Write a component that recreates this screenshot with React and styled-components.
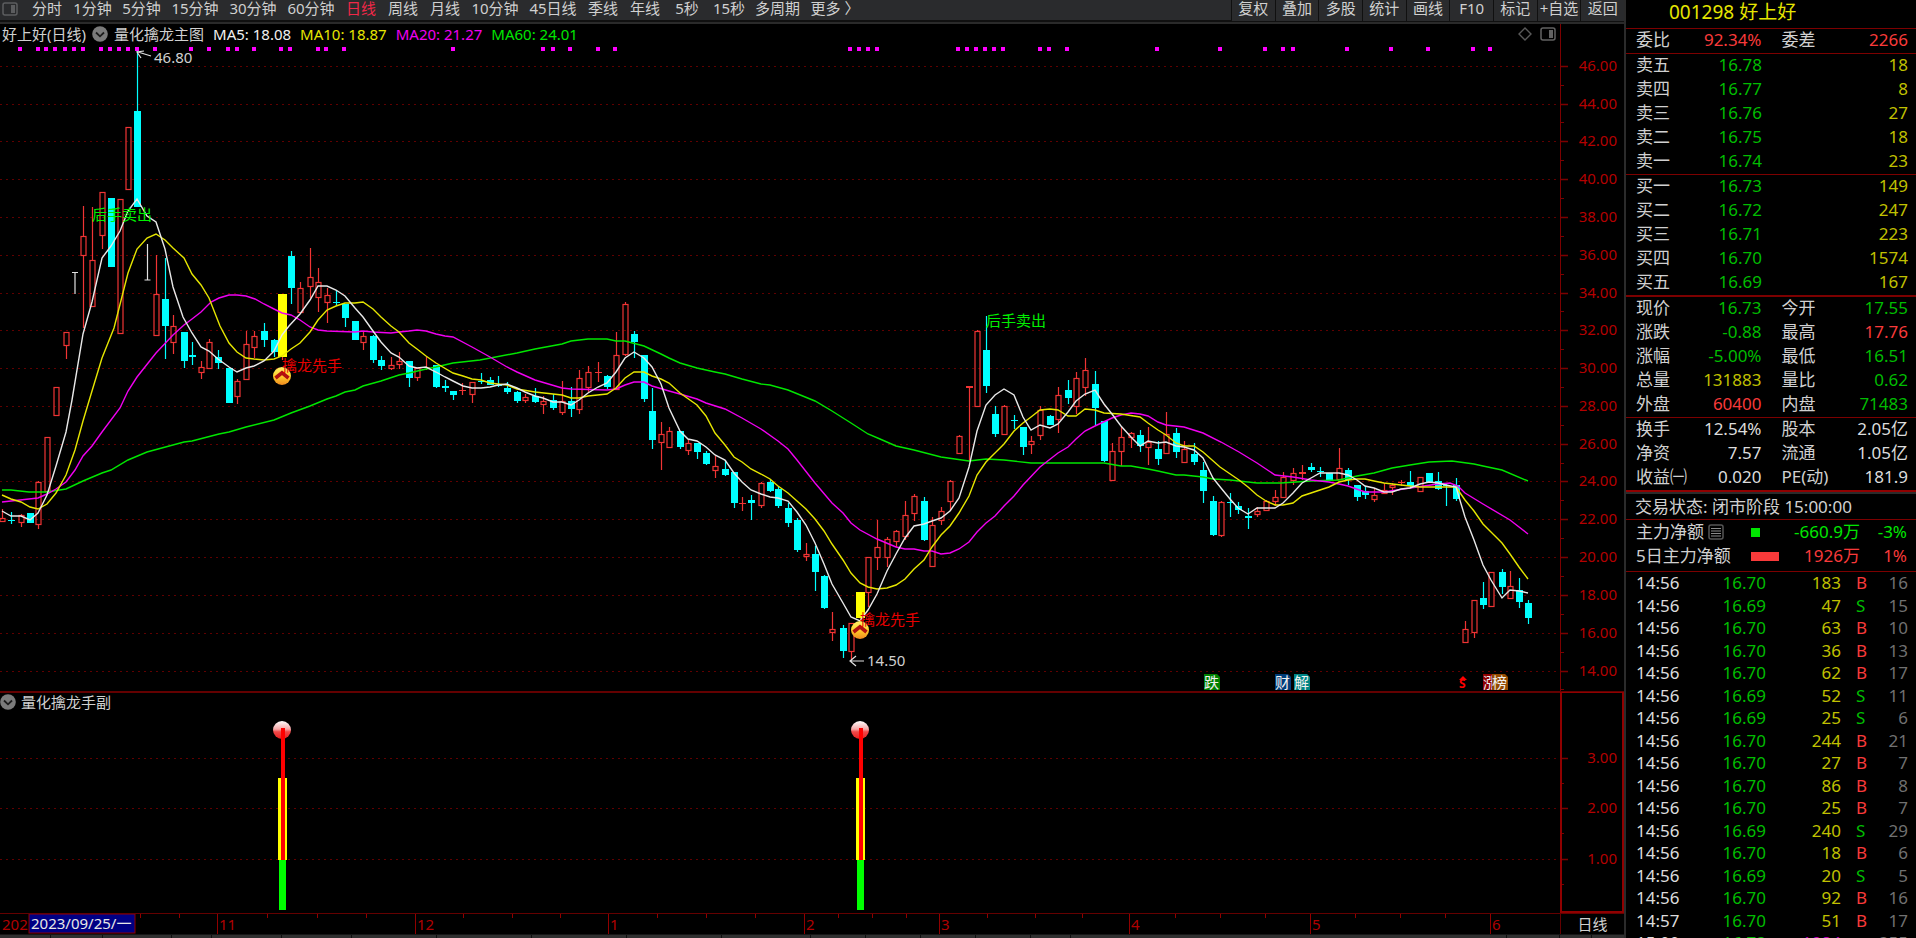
import React from 'react';
import styled, { createGlobalStyle } from 'styled-components';

const UP = '#f03434';
const DOWN = '#00ffff';
const LINE = '#7c0000';

const periods = [
  ['分时', 42],
  ['1分钟', 49],
  ['5分钟', 49],
  ['15分钟', 58],
  ['30分钟', 58],
  ['60分钟', 58],
  ['日线', 42],
  ['周线', 42],
  ['月线', 42],
  ['10分钟', 58],
  ['45日线', 58],
  ['季线', 42],
  ['年线', 42],
  ['5秒', 42],
  ['15秒', 42],
  ['多周期', 55],
  ['更多 〉', 60],
];

const tools = ['复权', '叠加', '多股', '统计', '画线', 'F10', '标记', '+自选', '返回'];

// x, high, open/close top, open/close bottom, low, kind
// r = rising, d = falling, y = signal bar, f = rising without a hollow
const candles = [
  [2, 509, 518, 521, 521, 'r'], [11, 512, 520, 521, 524, 'd'], [21, 514, 515, 522, 527, 'r'],
  [30, 513, 513, 523, 523, 'd'], [38, 481, 482, 524, 529, 'r'], [47, 437, 437, 491, 491, 'r'],
  [56, 387, 387, 415, 415, 'r'], [66, 332, 332, 345, 359, 'r'], [83, 206, 236, 255, 328, 'r'],
  [92, 207, 260, 306, 306, 'r'], [102, 192, 192, 235, 249, 'r'], [111, 198, 198, 267, 267, 'd'],
  [120, 199, 199, 333, 333, 'r'], [128, 127, 127, 189, 190, 'r'], [137, 51, 111, 207, 207, 'd'],
  [156, 255, 294, 335, 335, 'r'], [165, 258, 299, 326, 359, 'd'], [173, 315, 326, 342, 354, 'r'],
  [184, 332, 332, 361, 368, 'd'], [192, 342, 355, 357, 365, 'd'], [201, 361, 367, 372, 379, 'r'],
  [209, 339, 342, 368, 368, 'r'], [218, 350, 357, 363, 369, 'd'], [229, 368, 368, 403, 403, 'd'],
  [237, 379, 381, 396, 404, 'r'], [246, 331, 344, 379, 379, 'r'], [254, 331, 336, 347, 358, 'r'],
  [264, 323, 331, 340, 347, 'd'], [274, 339, 340, 352, 357, 'd'], [282, 294, 294, 357, 360, 'y'],
  [291, 251, 256, 288, 304, 'd'], [300, 282, 288, 312, 312, 'r'], [310, 248, 277, 286, 298, 'r'],
  [318, 268, 282, 297, 312, 'r'], [327, 288, 295, 302, 323, 'r'], [336, 290, 302, 303, 306, 'd'],
  [345, 304, 304, 318, 327, 'd'], [355, 321, 321, 340, 340, 'd'], [363, 331, 336, 342, 350, 'r'],
  [373, 335, 336, 360, 363, 'd'], [381, 356, 360, 366, 370, 'd'], [391, 357, 365, 368, 370, 'r'],
  [399, 352, 361, 364, 369, 'r'], [409, 361, 361, 378, 387, 'd'], [417, 368, 368, 377, 381, 'r'],
  [426, 357, 367, 368, 370, 'f'], [436, 365, 365, 387, 388, 'd'], [445, 380, 386, 388, 392, 'd'],
  [453, 391, 391, 395, 400, 'd'], [462, 383, 390, 391, 395, 'f'], [472, 382, 382, 394, 403, 'r'],
  [481, 373, 381, 382, 384, 'd'], [490, 377, 380, 385, 385, 'd'], [498, 376, 385, 386, 387, 'd'],
  [507, 382, 388, 392, 394, 'd'], [517, 391, 392, 401, 403, 'd'], [525, 394, 397, 400, 403, 'r'],
  [535, 388, 396, 402, 403, 'd'], [543, 396, 401, 404, 414, 'r'], [553, 394, 400, 408, 410, 'd'],
  [562, 381, 401, 412, 415, 'r'], [571, 387, 401, 409, 417, 'd'], [579, 370, 378, 409, 414, 'r'],
  [588, 366, 372, 387, 392, 'r'], [598, 362, 372, 373, 382, 'f'], [607, 375, 376, 387, 389, 'd'],
  [616, 332, 355, 389, 389, 'r'], [625, 302, 304, 354, 356, 'r'], [634, 331, 334, 342, 358, 'd'],
  [644, 355, 355, 399, 402, 'd'], [652, 388, 411, 440, 449, 'd'], [661, 422, 434, 442, 470, 'r'],
  [669, 427, 431, 447, 448, 'r'], [680, 431, 431, 447, 449, 'd'], [688, 440, 443, 450, 455, 'r'],
  [697, 443, 443, 452, 459, 'd'], [706, 451, 453, 464, 465, 'd'], [715, 456, 466, 470, 478, 'r'],
  [725, 460, 469, 475, 476, 'd'], [734, 472, 472, 503, 508, 'd'], [742, 497, 503, 504, 511, 'f'],
  [751, 495, 500, 503, 520, 'd'], [761, 482, 483, 505, 508, 'r'], [770, 479, 482, 491, 492, 'd'],
  [778, 486, 489, 506, 508, 'd'], [788, 503, 508, 523, 527, 'd'], [797, 518, 520, 550, 552, 'd'],
  [806, 543, 554, 556, 561, 'r'], [815, 546, 554, 572, 591, 'd'], [824, 575, 576, 608, 609, 'd'],
  [832, 612, 629, 632, 641, 'r'], [843, 625, 628, 651, 658, 'd'], [851, 623, 623, 651, 660, 'r'],
  [860, 592, 592, 618, 619, 'y'], [868, 557, 557, 592, 607, 'r'], [877, 520, 547, 557, 570, 'r'],
  [887, 537, 539, 557, 567, 'r'], [896, 530, 531, 541, 547, 'r'], [905, 501, 515, 536, 540, 'r'],
  [914, 494, 496, 513, 521, 'r'], [924, 497, 501, 540, 541, 'd'], [932, 517, 525, 566, 567, 'r'],
  [941, 507, 511, 520, 525, 'r'], [950, 480, 481, 501, 511, 'r'], [959, 435, 436, 453, 454, 'r'],
  [969, 386, 386, 388, 461, 'f'], [977, 330, 331, 406, 407, 'r'], [986, 316, 350, 386, 393, 'd'],
  [995, 406, 414, 434, 437, 'd'], [1004, 405, 406, 434, 435, 'r'], [1014, 415, 420, 421, 429, 'd'],
  [1023, 427, 427, 447, 455, 'd'], [1031, 436, 441, 444, 454, 'r'], [1040, 406, 410, 435, 440, 'r'],
  [1050, 415, 416, 425, 425, 'd'], [1058, 387, 395, 419, 433, 'r'], [1068, 380, 390, 398, 404, 'd'],
  [1076, 372, 378, 406, 414, 'r'], [1085, 358, 370, 387, 396, 'r'], [1095, 371, 384, 408, 425, 'd'],
  [1104, 421, 421, 461, 462, 'd'], [1112, 443, 451, 480, 480, 'r'], [1121, 427, 437, 451, 466, 'r'],
  [1131, 432, 433, 437, 448, 'r'], [1140, 430, 435, 446, 452, 'd'], [1148, 427, 442, 447, 465, 'r'],
  [1158, 441, 449, 459, 465, 'd'], [1166, 412, 434, 453, 453, 'r'], [1176, 428, 433, 452, 458, 'd'],
  [1184, 441, 449, 462, 462, 'r'], [1194, 443, 454, 462, 465, 'd'], [1203, 462, 470, 491, 503, 'd'],
  [1213, 496, 501, 535, 536, 'd'], [1221, 501, 502, 535, 537, 'r'], [1230, 493, 502, 503, 517, 'd'],
  [1238, 502, 506, 510, 514, 'd'], [1248, 508, 516, 518, 529, 'd'], [1257, 507, 511, 514, 517, 'r'],
  [1266, 500, 501, 510, 510, 'r'], [1275, 490, 497, 501, 506, 'r'], [1283, 472, 477, 497, 498, 'r'],
  [1293, 468, 473, 480, 485, 'r'], [1302, 465, 472, 474, 480, 'f'], [1311, 463, 467, 470, 472, 'd'],
  [1320, 467, 471, 472, 477, 'd'], [1329, 473, 473, 481, 481, 'd'], [1339, 448, 468, 479, 479, 'r'],
  [1348, 468, 470, 480, 485, 'd'], [1357, 485, 485, 497, 501, 'd'], [1365, 486, 491, 495, 499, 'd'],
  [1374, 489, 495, 499, 502, 'r'], [1384, 483, 490, 493, 493, 'r'], [1392, 483, 485, 487, 495, 'r'],
  [1401, 480, 482, 483, 486, 'f'], [1410, 471, 482, 486, 487, 'd'], [1420, 477, 477, 491, 491, 'r'],
  [1429, 473, 473, 483, 483, 'd'], [1438, 472, 481, 489, 490, 'd'], [1446, 484, 485, 486, 506, 'd'],
  [1456, 478, 485, 499, 501, 'd'], [1465, 621, 629, 642, 642, 'r'], [1474, 600, 600, 632, 638, 'r'],
  [1483, 582, 598, 605, 609, 'd'], [1491, 572, 572, 606, 606, 'r'], [1502, 569, 572, 587, 594, 'd'],
  [1510, 571, 586, 598, 599, 'r'], [1519, 578, 590, 602, 608, 'd'], [1528, 600, 603, 618, 624, 'd'],
];

const averages = [
  {
    color: '#00e600',
    points:
      '2,490 11,490 29,492 47,492 66,489 83,481 102,473 111,470 128,460 147,452 184,442 192,441 219,434 229,432 246,427 274,420 291,413 310,406 327,399 336,396 345,392 355,390 363,386 381,381 399,375 409,373 426,369 436,367 453,363 480,360 517,353 535,349 562,344 571,341 588,339 607,339 616,341 625,341 644,346 661,354 669,358 680,363 697,368 715,372 725,374 742,379 761,384 770,385 788,390 815,401 832,411 851,423 868,434 880,439 896,446 914,450 941,457 969,461 986,459 1004,460 1031,463 1104,463 1121,466 1131,466 1148,469 1158,471 1176,475 1184,475 1203,477 1213,479 1230,480 1257,483 1281,483 1311,481 1339,480 1357,476 1374,473 1392,468 1410,465 1429,462 1452,461 1474,464 1483,466 1502,470 1528,481',
  },
  {
    color: '#f000f0',
    points:
      '2,502 38,498 47,494 56,489 66,482 75,470 83,456 92,446 102,432 120,408 128,391 137,377 156,353 173,335 184,325 192,319 201,312 211,302 219,298 229,295 237,295 246,296 255,299 264,304 274,309 282,313 291,315 300,320 310,327 318,330 327,331 355,332 363,331 373,332 391,333 399,332 409,331 417,330 426,331 436,334 445,336 453,337 472,347 490,357 507,367 517,372 535,380 562,388 571,389 607,390 616,389 625,385 634,382 644,382 652,386 669,391 680,394 697,399 706,403 725,409 742,418 761,429 778,441 788,449 797,460 815,483 832,503 843,513 851,523 860,530 877,539 896,547 905,549 914,549 924,551 932,551 941,554 950,553 959,549 969,542 977,532 986,523 995,516 1004,506 1014,496 1023,485 1040,467 1058,453 1068,447 1076,439 1085,431 1095,426 1112,418 1121,415 1131,413 1140,414 1148,416 1158,422 1166,425 1184,427 1203,433 1221,442 1239,452 1257,463 1275,475 1293,477 1311,480 1329,482 1339,484 1348,486 1365,492 1384,492 1410,488 1438,484 1450,483 1458,486 1465,493 1483,504 1510,520 1528,534',
  },
  {
    color: '#e6e600',
    points:
      '2,495 11,499 21,502 30,507 38,509 47,504 56,493 66,475 75,450 83,421 92,391 102,358 114,328 128,273 137,249 147,238 156,234 165,240 173,248 184,258 192,274 201,285 209,298 220,326 229,343 237,352 246,358 254,359 264,360 274,359 282,356 291,349 300,343 310,332 318,320 327,310 336,306 345,303 355,303 363,302 373,309 381,317 391,326 399,332 409,343 417,349 426,356 436,363 453,373 463,376 472,379 481,380 490,383 498,384 507,385 517,389 535,392 562,395 571,398 579,398 588,396 607,394 616,388 625,378 634,372 644,372 652,376 661,379 669,383 680,393 697,405 706,416 715,433 725,445 734,457 742,462 751,469 761,474 770,479 778,486 788,493 797,501 806,509 815,519 824,531 832,544 843,560 851,573 860,583 868,587 877,589 887,588 896,585 905,579 914,569 924,560 932,547 941,535 950,526 959,513 969,496 977,475 986,462 995,453 1004,444 1014,431 1023,423 1031,417 1040,410 1050,409 1058,410 1068,416 1076,416 1085,409 1095,410 1104,413 1121,414 1140,417 1148,423 1158,430 1166,435 1176,443 1184,446 1194,446 1203,452 1220,467 1239,480 1248,487 1257,495 1266,501 1275,505 1283,505 1293,503 1302,496 1311,493 1320,490 1329,487 1339,482 1348,480 1357,479 1365,479 1374,481 1384,483 1401,485 1410,486 1420,487 1456,487 1465,500 1474,511 1483,524 1491,532 1502,543 1510,554 1519,567 1528,579',
  },
  {
    color: '#e8e8e8',
    points:
      '2,511 11,516 21,516 30,520 38,513 47,495 56,466 66,432 72,400 83,334 92,302 102,258 111,246 120,231 128,211 137,199 147,216 156,222 165,249 173,287 183,317 192,333 201,347 209,351 218,359 229,367 237,372 246,368 254,366 264,361 274,351 282,335 289,326 300,314 310,300 318,286 327,286 336,290 345,296 355,308 363,317 373,331 381,342 391,353 399,357 409,366 417,368 426,367 436,372 445,377 453,381 463,386 472,388 481,388 490,387 498,385 507,384 517,388 525,392 535,396 543,398 553,402 562,402 571,405 579,400 588,393 598,387 607,383 616,372 625,358 634,352 644,358 652,367 661,384 669,408 680,431 688,439 697,441 706,447 715,455 725,460 734,473 742,482 751,490 761,494 770,497 778,498 788,501 797,512 806,525 815,543 824,564 832,584 843,603 851,617 860,621 868,610 877,594 887,571 896,554 905,538 914,526 924,524 932,521 941,518 950,511 959,498 969,467 977,431 986,405 995,395 1004,389 1014,395 1023,417 1031,430 1040,425 1050,428 1058,424 1068,412 1076,401 1085,394 1095,390 1104,404 1112,414 1121,426 1131,437 1140,446 1148,441 1158,443 1166,442 1176,446 1184,447 1194,450 1203,458 1213,478 1221,488 1230,499 1238,508 1248,514 1257,508 1266,508 1275,508 1283,503 1293,493 1302,483 1311,478 1320,473 1329,473 1339,473 1348,475 1357,480 1365,486 1374,488 1384,492 1392,492 1401,489 1410,488 1420,484 1429,482 1438,483 1446,485 1456,487 1465,517 1474,540 1483,565 1491,580 1502,598 1510,590 1519,591 1528,593',
  },
];

const marks = [
  20, 38, 46, 55, 65, 74, 83, 101, 110, 119, 128, 137, 155, 191, 209, 228, 237, 254, 281, 290,
  318, 326, 344, 453, 543, 553, 570, 598, 615, 850, 859, 868, 877, 958, 967, 976, 985, 994, 1003,
  1040, 1049, 1067, 1157, 1220, 1265, 1283, 1293, 1347, 1391, 1428, 1473, 1490,
];

const prices = [46, 44, 42, 40, 38, 36, 34, 32, 30, 28, 26, 24, 22, 20, 18, 16, 14];
const priceY = price => Math.round(65.7 + (46 - price) * 18.9);

const signals = [282, 860];
const signalLevels = [
  ['3.00', 758],
  ['2.00', 808],
  ['1.00', 859],
];

const months = [
  ['11', 217], ['12', 415], ['1', 608], ['2', 804], ['3', 939], ['4', 1129], ['5', 1310], ['6', 1490],
];
const weeks = [
  140, 179, 267, 317, 366, 463, 512, 560, 657, 706, 755, 838, 872, 906, 987, 1035, 1082, 1175,
  1220, 1265, 1355, 1400, 1445,
];

const asks = [
  ['卖五', '16.78', '18'],
  ['卖四', '16.77', '8'],
  ['卖三', '16.76', '27'],
  ['卖二', '16.75', '18'],
  ['卖一', '16.74', '23'],
];
const bids = [
  ['买一', '16.73', '149'],
  ['买二', '16.72', '247'],
  ['买三', '16.71', '223'],
  ['买四', '16.70', '1574'],
  ['买五', '16.69', '167'],
];
const quote = [
  ['现价', '16.73', 'green', '今开', '17.55', 'green'],
  ['涨跌', '-0.88', 'green', '最高', '17.76', 'red'],
  ['涨幅', '-5.00%', 'green', '最低', '16.51', 'green'],
  ['总量', '131883', 'yellow', '量比', '0.62', 'green'],
  ['外盘', '60400', 'red', '内盘', '71483', 'green'],
];
const basics = [
  ['换手', '12.54%', 'white', '股本', '2.05亿', 'white'],
  ['净资', '7.57', 'white', '流通', '1.05亿', 'white'],
  ['收益㈠', '0.020', 'white', 'PE(动)', '181.9', 'white'],
];
const ticks = [
  ['14:56', '16.70', '183', 'B', '16'],
  ['14:56', '16.69', '47', 'S', '15'],
  ['14:56', '16.70', '63', 'B', '10'],
  ['14:56', '16.70', '36', 'B', '13'],
  ['14:56', '16.70', '62', 'B', '17'],
  ['14:56', '16.69', '52', 'S', '11'],
  ['14:56', '16.69', '25', 'S', '6'],
  ['14:56', '16.70', '244', 'B', '21'],
  ['14:56', '16.70', '27', 'B', '7'],
  ['14:56', '16.70', '86', 'B', '8'],
  ['14:56', '16.70', '25', 'B', '7'],
  ['14:56', '16.69', '240', 'S', '29'],
  ['14:56', '16.70', '18', 'B', '6'],
  ['14:56', '16.69', '20', 'S', '5'],
  ['14:56', '16.70', '92', 'B', '16'],
  ['14:57', '16.70', '51', 'B', '17'],
  ['15:00', '16.73', '1984', '', '355'],
];

const footerTabs = [51, 52, 69, 40, 70, 70, 85, 95, 95, 95, 89, 55, 55, 55, 55, 40, 436, 53, 32];

const colors = {
  green: '#00bc00',
  lime: '#00e600',
  red: '#f83a3a',
  yellow: '#c0c000',
  white: '#dcdcdc',
  gray: '#707070',
  purple: '#c000c0',
};

const PanelIcon = ({ color }) => (
  <svg width="16" height="14" viewBox="0 0 16 14" aria-hidden="true">
    <rect x="1" y="1" width="14" height="12" rx="2" fill="none" stroke={color} strokeWidth="1.5" />
    <rect x="9" y="3" width="4" height="8" fill={color} />
  </svg>
);

const FoldIcon = () => (
  <svg width="16" height="16" viewBox="0 0 16 16" aria-hidden="true">
    <circle cx="8" cy="8" r="7.8" fill="#7b7b7b" />
    <path d="M4 6.5l4 3.8 4-3.8" fill="none" stroke="#1c1c1c" strokeWidth="1.8" />
  </svg>
);

const Candle = ({ data }) => {
  const [x, high, top, bottom, low, kind] = data;
  const c = x + 0.5;
  if (kind === 'y') {
    return (
      <g>
        <line x1={c} x2={c} y1={bottom} y2={low} stroke={UP} strokeWidth="1.2" />
        <rect x={x - 4} y={top} width="9" height={bottom - top} fill="#ff0" />
      </g>
    );
  }
  const color = kind === 'd' ? DOWN : UP;
  return (
    <g stroke={color} strokeWidth="1.2">
      <line x1={c} x2={c} y1={high} y2={top} />
      <line x1={c} x2={c} y1={bottom} y2={low} />
      {kind === 'r' ? (
        <rect x={x - 2} y={top + 0.5} width="5" height={Math.max(bottom - top, 1)} fill="none" />
      ) : (
        <rect
          x={x - 3}
          y={top}
          width="7"
          height={Math.max(bottom - top, 1)}
          fill={color}
          stroke="none"
        />
      )}
    </g>
  );
};

const Coin = ({ x, y }) => (
  <g transform={`translate(${x} ${y})`}>
    <circle r="9" fill="url(#coin)" />
    <path d="M-6.5 2L0 -3.2 6.5 2" fill="none" stroke="#b01010" strokeWidth="3.6" />
  </g>
);

const Badge = ({ x, color, children }) => (
  <g>
    <path d={`M${x} 674h13l3 3v13h-16z`} fill={color} />
    <text x={x} y="688" fill="#f0f0f0">
      {children}
    </text>
  </g>
);

const PricePlot = () => (
  <Plot $height={647} role="img" aria-label="日线 K线图">
    <defs>
      <linearGradient id="coin" x1="0" y1="0" x2="0" y2="1">
        <stop offset="0" stopColor="#fff36a" />
        <stop offset="0.5" stopColor="#ffcf2a" />
        <stop offset="1" stopColor="#f08a20" />
      </linearGradient>
    </defs>
    <g transform="translate(0 -44)">
      {prices.map(price => (
        <GridLine key={price} x2="100%" y1={priceY(price) + 0.5} y2={priceY(price) + 0.5} />
      ))}
      {candles.map(data => (
        <Candle key={data[0]} data={data} />
      ))}
      <path d="M72 272.5h6M75 272v22M147.500 244v36M144.500 280h6" stroke="#e0e0e0" strokeWidth="1.2" />
      {averages.map(({ color, points }) => (
        <polyline key={color} points={points} fill="none" stroke={color} strokeWidth="1.4" />
      ))}
      {marks.map(x => (
        <rect key={x} x={x - 2} y="47" width="4" height="4" fill="#ff00ff" />
      ))}
      <path
        d="M151 56L138 52M144 51l-7 1 4 6M864 661h-13M856 656l-6 5 6 5"
        fill="none"
        stroke="#e0e0e0"
        strokeWidth="1.2"
      />
      <text x="154" y="63" fill="#d0d0d0">46.80</text>
      <text x="867" y="666" fill="#d0d0d0">14.50</text>
      <Coin x={282} y={376} />
      <Coin x={860} y={630} />
      <text x="92" y="220" fill="#00f000">后手卖出</text>
      <text x="986" y="326" fill="#00f000">后手卖出</text>
      <text x="282" y="371" fill="#e60000">擒龙先手</text>
      <text x="860" y="625" fill="#e60000">擒龙先手</text>
      <Badge x={1204} color="#008000">跌</Badge>
      <Badge x={1275} color="#003c78">财</Badge>
      <Badge x={1294} color="#008484">解</Badge>
      <path d="M1463 676l-4 4h8z" fill="#f00" />
      <BadgeMark x="1459" y="688">S</BadgeMark>
      <Badge x={1483} color="#900000">涨</Badge>
      <Badge x={1492} color="#944a00">榜</Badge>
    </g>
  </Plot>
);

const PriceScale = () => (
  <Plot $height={667} aria-label="价格">
    <g transform="translate(0 -24)">
      <line x1="0.5" x2="0.5" y1="24" y2="691" stroke={LINE} />
      {prices.map(price => (
        <g key={price} stroke={LINE}>
          <line x1="1" x2="8" y1={priceY(price) + 0.5} y2={priceY(price) + 0.5} strokeWidth="1.5" />
          <line x1="1" x2="4" y1={priceY(price - 1) + 0.5} y2={priceY(price - 1) + 0.5} />
          <ScaleText x="57" y={priceY(price) + 5}>
            {price}.00
          </ScaleText>
        </g>
      ))}
    </g>
  </Plot>
);

const SignalPlot = () => (
  <Plot $height={202} role="img" aria-label="量化擒龙手副图">
    <defs>
      <linearGradient id="ball" x1="0" y1="0" x2="0" y2="1">
        <stop offset="0" stopColor="#fff" />
        <stop offset="0.45" stopColor="#f6a8a8" />
        <stop offset="0.6" stopColor="#f04848" />
        <stop offset="1" stopColor="#e82020" />
      </linearGradient>
    </defs>
    <g transform="translate(0 -711)">
      {signalLevels.map(([label, y]) => (
        <GridLine key={label} x2="100%" y1={y + 0.5} y2={y + 0.5} />
      ))}
      {signals.map(x => (
        <g key={x}>
          <circle cx={x} cy="730" r="9" fill="url(#ball)" />
          <rect x={x - 4} y="778" width="9" height="82" fill="#ff0" />
          <rect x={x - 3} y="860" width="7" height="50" fill="#0f0" />
          <rect x={x - 1} y="728" width="4" height="132" fill="#f00" />
        </g>
      ))}
    </g>
  </Plot>
);

const SignalScale = () => (
  <Plot $height={218} aria-label="指标">
    <g transform="translate(-2 -693)">
      {signalLevels.map(([label, y]) => (
        <g key={label} stroke={LINE}>
          <line x1="1" x2="8" y1={y + 0.5} y2={y + 0.5} strokeWidth="1.5" />
          <line x1="1" x2="4" y1={y + 25.5} y2={y + 25.5} />
          <ScaleText x="57" y={y + 5}>
            {label}
          </ScaleText>
        </g>
      ))}
    </g>
  </Plot>
);

const TimeScale = () => (
  <Plot $height={20} aria-label="日期">
    <text x="2" y="16" fill="#b00000">202</text>
    {weeks.map(x => (
      <line key={x} x1={x + 0.5} x2={x + 0.5} y1="0" y2="4" stroke="#900000" />
    ))}
    {months.map(([label, x]) => (
      <g key={x}>
        <line x1={x + 0.5} x2={x + 0.5} y1="0" y2="20" stroke="#900000" />
        <text x={x + 2} y="16" fill="#b00000">
          {label}
        </text>
      </g>
    ))}
    <rect x="29" y="0" width="106" height="19" fill="#000084" stroke="#900000" />
    <text x="31" y="15" fill="#e8e8e8">2023/09/25/一</text>
  </Plot>
);

const PairTable = ({ rows }) => (
  <QuoteTable>
    <tbody>
      {rows.map(([name, value, tone, name2, value2, tone2]) => (
        <tr key={name}>
          <LabelCell scope="row">{name}</LabelCell>
          <ValueCell $tone={tone}>{value}</ValueCell>
          <LabelCell scope="row" $second>
            {name2}
          </LabelCell>
          <ValueCell $tone={tone2}>{value2}</ValueCell>
        </tr>
      ))}
    </tbody>
  </QuoteTable>
);

const DepthTable = ({ rows }) => (
  <QuoteTable>
    <colgroup>
      <col width="57" />
      <col width="69" />
      <col />
    </colgroup>
    <tbody>
      {rows.map(([name, price, volume]) => (
        <tr key={name}>
          <LabelCell scope="row">{name}</LabelCell>
          <ValueCell $tone="green">{price}</ValueCell>
          <ValueCell $tone="yellow">{volume}</ValueCell>
        </tr>
      ))}
    </tbody>
  </QuoteTable>
);

const App = () => (
  <Screen>
    <GlobalStyle />
    <ChartSide>
      <Toolbar>
        <PanelToggle type="button" aria-label="侧栏">
          <PanelIcon color="#5c5d5f" />
        </PanelToggle>
        {periods.map(([label, width]) => (
          <PeriodButton type="button" key={label} $width={width} $active={label === '日线'}>
            {label}
          </PeriodButton>
        ))}
        <ToolGroup>
          {tools.map(label => (
            <ToolButton type="button" key={label}>
              {label}
            </ToolButton>
          ))}
        </ToolGroup>
      </Toolbar>

      <ChartRow>
        <PlotColumn>
          <Legend>
            <span>好上好(日线)</span>
            <FoldIcon />
            <span>量化擒龙主图</span>
            <Average $color="#f0f0f0">MA5: 18.08</Average>
            <Average $color="#e6e600">MA10: 18.87</Average>
            <Average $color="#f000f0">MA20: 21.27</Average>
            <Average $color="#00e600">MA60: 24.01</Average>
            <LegendTools>
              <svg width="14" height="14" viewBox="0 0 14 14" aria-hidden="true">
                <path d="M7 1l6 6-6 6-6-6z" fill="none" stroke="#5a5a5a" strokeWidth="1.4" />
              </svg>
              <PanelIcon color="#626262" />
            </LegendTools>
          </Legend>
          <PricePlot />
        </PlotColumn>
        <PriceScale />
      </ChartRow>

      <SignalRow>
        <PlotColumn>
          <SignalLegend>
            <FoldIcon />
            <span>量化擒龙手副</span>
          </SignalLegend>
          <SignalPlot />
        </PlotColumn>
        <ScaleBox>
          <SignalScale />
        </ScaleBox>
      </SignalRow>

      <TimeRow>
        <TimeScale />
        <PeriodName>日线</PeriodName>
      </TimeRow>
      <Footer>
        {footerTabs.map((width, i) => (
          <FooterTab key={i} $width={width} />
        ))}
      </Footer>
    </ChartSide>

    <QuoteSide>
      <StockTitle>001298 好上好</StockTitle>
      <Block>
        <PairTable rows={[['委比', '92.34%', 'red', '委差', '2266', 'red']]} />
      </Block>
      <Block>
        <DepthTable rows={asks} />
      </Block>
      <Block>
        <DepthTable rows={bids} />
      </Block>
      <Block $thick>
        <PairTable rows={quote} />
      </Block>
      <Block>
        <PairTable rows={basics} />
      </Block>
      <Status>交易状态: 闭市阶段 15:00:00</Status>
      <FlowBlock>
        <FlowRow>
          <FlowName>
            主力净额
            <svg width="16" height="16" viewBox="0 0 16 16" aria-hidden="true">
              <rect x="1" y="1" width="14" height="14" rx="2" fill="none" stroke="#555" strokeWidth="1.5" />
              <path d="M3 4.500h10M3 7h10M3 9.500h10M3 12h10" stroke="#8a8a8a" />
            </svg>
          </FlowName>
          <FlowBar $tone="lime" $width={9} />
          <FlowValue $tone="lime">-660.9万</FlowValue>
          <FlowValue $tone="lime">-3%</FlowValue>
        </FlowRow>
        <FlowRow>
          <FlowName>5日主力净额</FlowName>
          <FlowBar $tone="red" $width={28} />
          <FlowValue $tone="red">1926万</FlowValue>
          <FlowValue $tone="red">1%</FlowValue>
        </FlowRow>
      </FlowBlock>
      <Block>
        <TickTable>
          <colgroup>
            <col width="52" />
            <col width="78" />
            <col width="75" />
            <col width="32" />
            <col />
          </colgroup>
          <tbody>
            {ticks.map(([time, price, volume, side, count], i) => (
              <tr key={i}>
                <TimeCell>{time}</TimeCell>
                <ValueCell $tone="green">{price}</ValueCell>
                <ValueCell $tone={side ? 'yellow' : 'purple'}>{volume}</ValueCell>
                <SideCell $tone={side === 'B' ? 'red' : 'green'}>{side}</SideCell>
                <ValueCell $tone="gray">{count}</ValueCell>
              </tr>
            ))}
          </tbody>
        </TickTable>
      </Block>
    </QuoteSide>
  </Screen>
);

export default App;

const GlobalStyle = createGlobalStyle`
  * {
    box-sizing: border-box;
  }
  body {
    margin: 0;
    overflow: hidden;
    background: #000;
    color: #d0d0d0;
    font-family: 'Noto Sans', 'Noto Sans CJK SC', sans-serif;
    font-size: 15px;
    line-height: 20px;
  }
  button {
    padding: 0;
    border: 0;
    background: none;
    color: inherit;
    font: inherit;
    white-space: nowrap;
  }
`;

const Screen = styled.div`
  display: flex;
  height: 100vh;
  overflow: hidden;
`;

const ChartSide = styled.main`
  display: flex;
  flex-direction: column;
  flex: 1;
  min-width: 0;
`;

const Toolbar = styled.nav`
  display: flex;
  flex: none;
  height: 24px;
  background: linear-gradient(#2a2b2d 20px, #101010 20px, #101010 22px, #2a2a2a 22px);
`;

const PanelToggle = styled.button`
  display: flex;
  align-items: center;
  width: 26px;
  height: 18px;
  padding-left: 2px;
`;

const PeriodButton = styled.button`
  flex: none;
  width: ${({ $width }) => $width}px;
  height: 16px;
  line-height: 16px;
  color: ${({ $active }) => ($active ? '#f02848' : '#d0d0d0')};
`;

const ToolGroup = styled.div`
  display: grid;
  grid-template-columns: repeat(9, 1fr);
  flex: none;
  width: 393px;
  margin-left: auto;
`;

const ToolButton = styled.button`
  height: 21px;
  padding-bottom: 5px;
  border-left: 1px solid #101010;
  background: #2a2b2d;
  line-height: 16px;
`;

const ChartRow = styled.section`
  display: grid;
  grid-template-columns: minmax(0, 1fr) 64px;
  flex: none;
`;

const SignalRow = styled(ChartRow)`
  border-top: 2px solid #640000;
`;

const PlotColumn = styled.div`
  display: flex;
  flex-direction: column;
  min-width: 0;
`;

const Plot = styled.svg`
  display: block;
  width: 100%;
  height: ${({ $height }) => $height}px;
`;

const GridLine = styled.line`
  stroke: #600000;
  stroke-dasharray: 2 4;
`;

const ScaleText = styled.text`
  fill: #b40000;
  stroke: none;
  text-anchor: end;
`;

const BadgeMark = styled.text`
  fill: #f00;
  font-size: 12px;
  font-weight: bold;
`;

const Legend = styled.header`
  display: flex;
  align-items: center;
  gap: 6px;
  height: 20px;
  padding-left: 2px;
  white-space: nowrap;
`;

const Average = styled.span`
  margin-left: 3px;
  color: ${({ $color }) => $color};
`;

const LegendTools = styled.div`
  display: flex;
  align-items: center;
  gap: 8px;
  margin-left: auto;
  padding-right: 4px;
`;

const SignalLegend = styled(Legend)`
  gap: 5px;
  height: 18px;
  padding-left: 0;
`;

const ScaleBox = styled.div`
  margin-top: -1px;
  border: 2px solid #900000;
  border-top-width: 1px;
`;

const TimeRow = styled.div`
  display: grid;
  grid-template-columns: minmax(0, 1fr) 64px;
  flex: none;
  border-top: 1px solid #640000;
`;

const PeriodName = styled.div`
  border-left: 1px solid #640000;
  text-align: center;
`;

const Footer = styled.footer`
  display: flex;
  flex: 1;
  border-top: 1px solid #161616;
  background: #303030;
`;

const FooterTab = styled.div`
  flex: none;
  width: ${({ $width }) => $width}px;
  border-right: 1px solid #101010;
`;

const QuoteSide = styled.aside`
  flex: none;
  width: 292px;
  border-left: 2px solid #2b2b2b;
  overflow: hidden;
  font-size: 17px;
  line-height: 24px;
  white-space: nowrap;
`;

const StockTitle = styled.h1`
  height: 28px;
  margin: 0;
  padding-left: 43px;
  color: #e6e600;
  font-size: 19px;
  font-weight: normal;
  line-height: 24px;
`;

const Block = styled.section`
  padding-left: 10px;
  border-top: ${({ $thick }) => ($thick ? '2px' : '1px')} solid ${LINE};
`;

const QuoteTable = styled.table`
  width: 272px;
  border-collapse: collapse;
  table-layout: fixed;
`;

const LabelCell = styled.th`
  width: ${({ $second }) => ($second ? '78px' : '57px')};
  height: 24px;
  padding: 0 0 0 ${({ $second }) => ($second ? '20px' : '0')};
  color: #d0d0d0;
  font-weight: normal;
  line-height: 22px;
  text-align: left;
  vertical-align: top;
`;

const ValueCell = styled.td`
  padding: 0;
  color: ${({ $tone }) => colors[$tone]};
  line-height: 22px;
  text-align: right;
  vertical-align: top;
`;

const Status = styled.p`
  height: 29px;
  margin: 0;
  padding: 3px 0 0 9px;
  border-top: 2px solid #900000;
  box-shadow: inset 0 2px #2b2b2b;
`;

const FlowBlock = styled(Block)`
  padding-bottom: 3px;
`;

const FlowRow = styled.div`
  display: grid;
  grid-template-columns: 115px 30px 79px 47px;
  align-items: center;
`;

const FlowName = styled.span`
  display: flex;
  align-items: center;
  gap: 4px;
`;

const FlowBar = styled.span`
  width: ${({ $width }) => $width}px;
  height: 9px;
  background: ${({ $tone }) => colors[$tone]};
`;

const FlowValue = styled.span`
  color: ${({ $tone }) => colors[$tone]};
  text-align: right;
`;

const TickTable = styled.table`
  width: 272px;
  height: 383px;
  border-collapse: collapse;
  table-layout: fixed;
`;

const TimeCell = styled.td`
  padding: 0;
  color: #dcdcdc;
  line-height: 22px;
  vertical-align: top;
`;

const SideCell = styled(ValueCell)`
  padding-left: 15px;
  text-align: left;
`;
